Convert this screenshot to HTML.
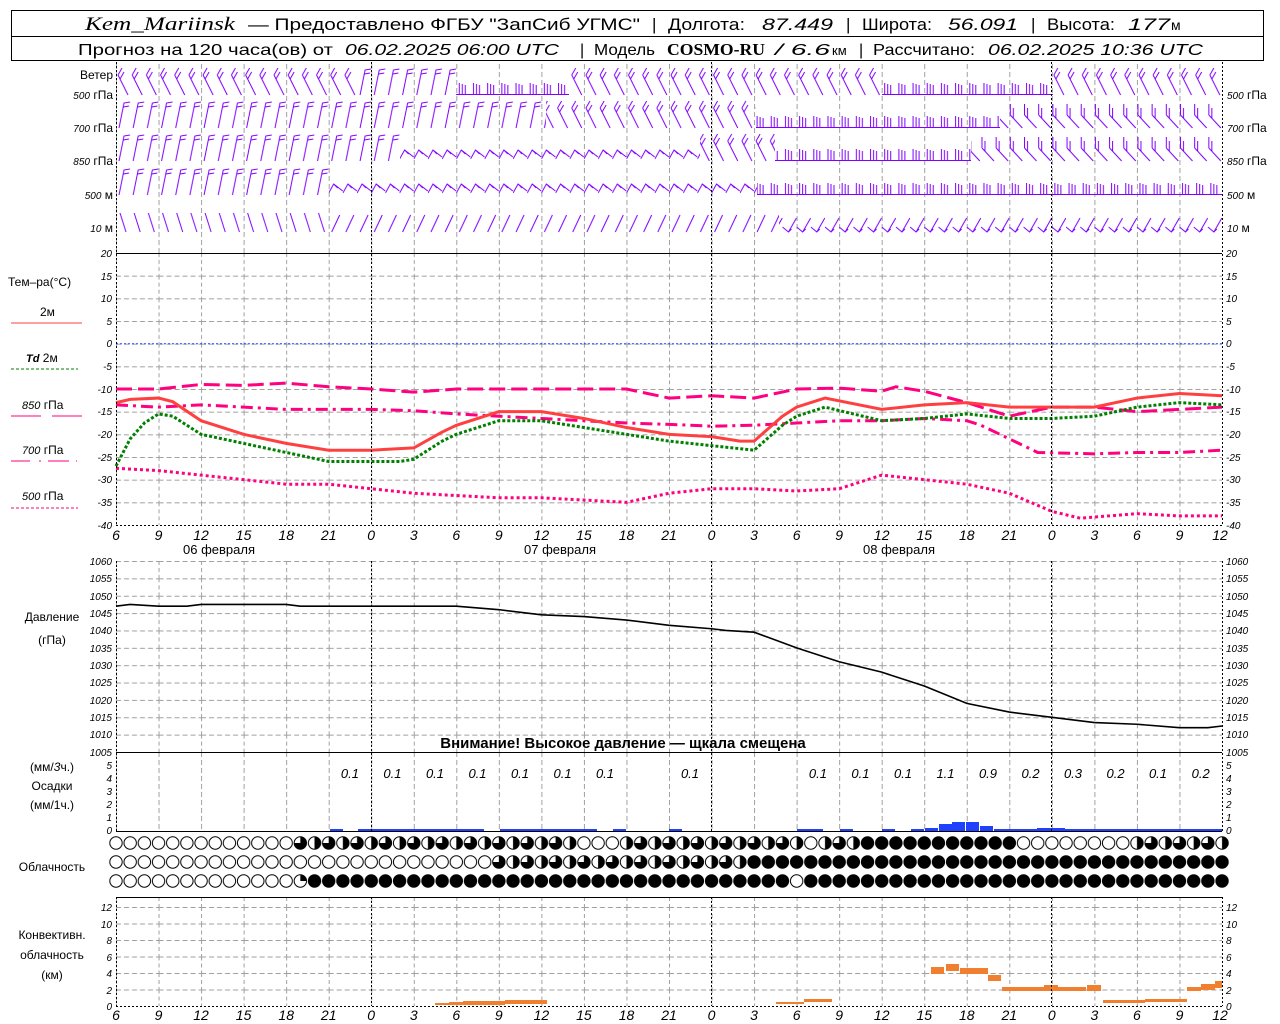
<!DOCTYPE html>
<html><head><meta charset="utf-8"><style>
html,body{margin:0;padding:0;background:#fff;width:1280px;height:1024px;overflow:hidden}
svg{display:block}
text{font-family:"Liberation Sans","DejaVu Sans",sans-serif;fill:#000}
.n{font-size:10px;font-style:italic}
.l{font-size:12px}
.x{font-size:14px;font-style:italic}
</style></head><body>
<svg width="1280" height="1024" viewBox="0 0 1280 1024" xmlns="http://www.w3.org/2000/svg">
<defs>
<pattern id="gT" patternUnits="userSpaceOnUse" x="116" y="253" width="42.538" height="22.667">
<line x1="0.5" y1="0" x2="0.5" y2="22.667" stroke="#a0a0a0" stroke-dasharray="4,3"/>
<line x1="0" y1="0.5" x2="42.538" y2="0.5" stroke="#a0a0a0" stroke-dasharray="5,3"/>
</pattern>
<pattern id="gP" patternUnits="userSpaceOnUse" x="116" y="561" width="42.538" height="17.364">
<line x1="0.5" y1="0" x2="0.5" y2="17.364" stroke="#a0a0a0" stroke-dasharray="4,3"/>
<line x1="0" y1="0.5" x2="42.538" y2="0.5" stroke="#a0a0a0" stroke-dasharray="5,3"/>
</pattern>
<pattern id="gC" patternUnits="userSpaceOnUse" x="116" y="907" width="42.538" height="16.5">
<line x1="0.5" y1="0" x2="0.5" y2="16.5" stroke="#a0a0a0" stroke-dasharray="4,3"/>
<line x1="0" y1="0.5" x2="42.538" y2="0.5" stroke="#a0a0a0" stroke-dasharray="5,3"/>
</pattern>
<pattern id="gV" patternUnits="userSpaceOnUse" x="116" y="0" width="42.538" height="8">
<line x1="0.5" y1="0" x2="0.5" y2="5" stroke="#a0a0a0"/>
</pattern>
<!-- cloud patterns -->
<pattern id="cE" patternUnits="userSpaceOnUse" x="108.91" y="0" width="14.18" height="1024">
<circle cx="7.09" cy="843" r="6.2" fill="#fff" stroke="#000"/><circle cx="7.09" cy="862" r="6.2" fill="#fff" stroke="#000"/><circle cx="7.09" cy="881" r="6.2" fill="#fff" stroke="#000"/>
</pattern>
<pattern id="cF" patternUnits="userSpaceOnUse" x="108.91" y="0" width="14.18" height="1024">
<circle cx="7.09" cy="843" r="6.7" fill="#000"/><circle cx="7.09" cy="862" r="6.7" fill="#000"/><circle cx="7.09" cy="881" r="6.7" fill="#000"/>
</pattern>
<pattern id="cH" patternUnits="userSpaceOnUse" x="108.91" y="0" width="28.36" height="1024">
<circle cx="7.09" cy="843" r="6.2" fill="#fff" stroke="#000"/><path d="M7.09 836.8A6.2 6.2 0 0 1 7.09 849.2Z" fill="#000"/>
<circle cx="7.09" cy="862" r="6.2" fill="#fff" stroke="#000"/><path d="M7.09 855.8A6.2 6.2 0 0 1 7.09 868.2Z" fill="#000"/>
<circle cx="7.09" cy="881" r="6.2" fill="#fff" stroke="#000"/><path d="M7.09 874.8A6.2 6.2 0 0 1 7.09 887.2Z" fill="#000"/>
<circle cx="21.27" cy="843" r="6.2" fill="#fff" stroke="#000"/><path d="M21.27 843V836.8A6.2 6.2 0 1 1 15.07 843Z" fill="#000"/>
<circle cx="21.27" cy="862" r="6.2" fill="#fff" stroke="#000"/><path d="M21.27 862V855.8A6.2 6.2 0 1 1 15.07 862Z" fill="#000"/>
<circle cx="21.27" cy="881" r="6.2" fill="#fff" stroke="#000"/><path d="M21.27 881V874.8A6.2 6.2 0 0 1 27.47 881Z" fill="#000"/>
</pattern>
<!-- wind barb patterns (tile 14.18 x 30, base at y=28) -->
<pattern id="wF" patternUnits="userSpaceOnUse" x="0" y="0" width="14.18" height="30">
<path d="M3 28L8 3L14 2M7.5 7L13 6" stroke="#8000ff" fill="none" stroke-width="1"/>
</pattern>
<pattern id="wC" patternUnits="userSpaceOnUse" x="0" y="0" width="14.18" height="30">
<path d="M2 8L12 28M2 8L6 1M4 12L8 5" stroke="#8000ff" fill="none" stroke-width="1"/>
</pattern>
<pattern id="wZ" patternUnits="userSpaceOnUse" x="0" y="0" width="14.18" height="30">
<path d="M0 26L5 17L14 24M5 17L9 21" stroke="#8000ff" fill="none" stroke-width="1"/>
</pattern>
<pattern id="wH" patternUnits="userSpaceOnUse" x="0" y="0" width="14.18" height="30">
<path d="M0 27.5H14.18M3 27V16M6 27V17M9 27V18" stroke="#8000ff" fill="none" stroke-width="1"/>
</pattern>
<pattern id="wL" patternUnits="userSpaceOnUse" x="0" y="0" width="14.18" height="30">
<path d="M1 15L13 28M1 15V4M4 18V8" stroke="#8000ff" fill="none" stroke-width="1"/>
</pattern>
<pattern id="wS" patternUnits="userSpaceOnUse" x="0" y="0" width="14.18" height="30">
<path d="M3 27L11 10" stroke="#8000ff" fill="none" stroke-width="1"/>
</pattern>
<pattern id="wB" patternUnits="userSpaceOnUse" x="0" y="0" width="14.18" height="30">
<path d="M4 8L10 27" stroke="#8000ff" fill="none" stroke-width="1"/>
</pattern>
<pattern id="wW" patternUnits="userSpaceOnUse" x="0" y="0" width="14.18" height="30">
<path d="M0 22L6 27L14 13M6 27L9 24" stroke="#8000ff" fill="none" stroke-width="1"/>
</pattern>
</defs>

<!-- Header -->
<rect x="11.5" y="10.5" width="1252" height="50" fill="none" stroke="#000"/>
<line x1="11" y1="36.5" x2="1264" y2="36.5" stroke="#000"/>
<text x="85" y="30" style="font-family:'Liberation Serif',serif;font-style:italic;font-size:19px" textLength="150" lengthAdjust="spacingAndGlyphs">Kem_Mariinsk</text>
<text x="248" y="30" style="font-size:17px" textLength="392" lengthAdjust="spacingAndGlyphs">— Предоставлено ФГБУ "ЗапСиб УГМС"</text>
<text x="652" y="30" style="font-size:17px">|</text>
<text x="668" y="30" style="font-size:17px" textLength="77" lengthAdjust="spacingAndGlyphs">Долгота:</text>
<text x="762" y="30" style="font-size:17px;font-style:italic" textLength="71" lengthAdjust="spacingAndGlyphs">87.449</text>
<text x="846" y="30" style="font-size:17px">|</text>
<text x="862" y="30" style="font-size:17px" textLength="70" lengthAdjust="spacingAndGlyphs">Широта:</text>
<text x="948" y="30" style="font-size:17px;font-style:italic" textLength="70" lengthAdjust="spacingAndGlyphs">56.091</text>
<text x="1031" y="30" style="font-size:17px">|</text>
<text x="1047" y="30" style="font-size:17px" textLength="68" lengthAdjust="spacingAndGlyphs">Высота:</text>
<text x="1128" y="30" style="font-size:17px;font-style:italic" textLength="42" lengthAdjust="spacingAndGlyphs">177</text>
<text x="1171" y="30" style="font-size:14px">м</text>
<text x="78" y="55" style="font-size:16px" textLength="255" lengthAdjust="spacingAndGlyphs">Прогноз на 120 часа(ов) от</text>
<text x="345" y="55" style="font-size:16px;font-style:italic" textLength="214" lengthAdjust="spacingAndGlyphs">06.02.2025 06:00 UTC</text>
<text x="580" y="55" style="font-size:16px">|</text>
<text x="594" y="55" style="font-size:16px" textLength="61" lengthAdjust="spacingAndGlyphs">Модель</text>
<text x="667" y="55" style="font-family:'Liberation Serif',serif;font-weight:bold;font-size:17px" textLength="98" lengthAdjust="spacingAndGlyphs">COSMO-RU</text>
<text x="775" y="55" style="font-size:16px;font-style:italic" textLength="55" lengthAdjust="spacingAndGlyphs">/ 6.6</text>
<text x="832" y="55" style="font-size:13px">км</text>
<text x="859" y="55" style="font-size:16px">|</text>
<text x="873" y="55" style="font-size:16px" textLength="102" lengthAdjust="spacingAndGlyphs">Рассчитано:</text>
<text x="988" y="55" style="font-size:16px;font-style:italic" textLength="215" lengthAdjust="spacingAndGlyphs">06.02.2025 10:36 UTC</text>

<!-- Wind panel -->
<rect x="116" y="62" width="1106" height="191" fill="url(#gV)"/>
<g transform="translate(116,67)">
<rect x="0" y="0" width="241" height="30" fill="url(#wC)"/>
<rect x="241" y="0" width="99" height="30" fill="url(#wF)"/>
<rect x="340" y="0" width="113" height="30" fill="url(#wH)"/>
<rect x="453" y="0" width="313" height="30" fill="url(#wC)"/>
<rect x="766" y="0" width="171" height="30" fill="url(#wH)"/>
<rect x="937" y="0" width="169" height="30" fill="url(#wC)"/>
</g>
<g transform="translate(116,100)">
<rect x="0" y="0" width="430" height="30" fill="url(#wF)"/>
<rect x="430" y="0" width="210" height="30" fill="url(#wC)"/>
<rect x="640" y="0" width="244" height="30" fill="url(#wH)"/>
<rect x="884" y="0" width="222" height="30" fill="url(#wL)"/>
</g>
<g transform="translate(116,133)">
<rect x="0" y="0" width="284" height="30" fill="url(#wF)"/>
<rect x="284" y="0" width="300" height="30" fill="url(#wZ)"/>
<rect x="584" y="0" width="75" height="30" fill="url(#wC)"/>
<rect x="659" y="0" width="196" height="30" fill="url(#wH)"/>
<rect x="855" y="0" width="251" height="30" fill="url(#wL)"/>
</g>
<g transform="translate(116,167)">
<rect x="0" y="0" width="213" height="30" fill="url(#wF)"/>
<rect x="213" y="0" width="428" height="30" fill="url(#wZ)"/>
<rect x="641" y="0" width="465" height="30" fill="url(#wH)"/>
</g>
<g transform="translate(116,205)">
<rect x="0" y="0" width="213" height="30" fill="url(#wB)"/>
<rect x="213" y="0" width="450" height="30" fill="url(#wS)"/>
<rect x="663" y="0" width="443" height="30" fill="url(#wW)"/>
</g>
<text class="l" x="113" y="79" text-anchor="end">Ветер</text>
<text class="l" x="113" y="99" text-anchor="end"><tspan font-style="italic" font-size="10">500</tspan> гПа</text>
<text class="l" x="113" y="132" text-anchor="end"><tspan font-style="italic" font-size="10">700</tspan> гПа</text>
<text class="l" x="113" y="165" text-anchor="end"><tspan font-style="italic" font-size="10">850</tspan> гПа</text>
<text class="l" x="113" y="199" text-anchor="end"><tspan font-style="italic" font-size="10">500</tspan> м</text>
<text class="l" x="113" y="232" text-anchor="end"><tspan font-style="italic" font-size="10">10</tspan>   м</text>
<text class="l" x="1227" y="99"><tspan font-style="italic" font-size="10">500</tspan> гПа</text>
<text class="l" x="1227" y="132"><tspan font-style="italic" font-size="10">700</tspan> гПа</text>
<text class="l" x="1227" y="165"><tspan font-style="italic" font-size="10">850</tspan> гПа</text>
<text class="l" x="1227" y="199"><tspan font-style="italic" font-size="10">500</tspan> м</text>
<text class="l" x="1227" y="232"><tspan font-style="italic" font-size="10">10</tspan>   м</text>

<!-- Temperature panel -->
<rect x="116" y="253" width="1106" height="272" fill="url(#gT)"/>
<line x1="116" y1="253.5" x2="1222" y2="253.5" stroke="#000"/>
<line x1="116" y1="525.5" x2="1222" y2="525.5" stroke="#000" stroke-dasharray="2,2"/>
<line x1="116" y1="343.7" x2="1222" y2="343.7" stroke="#2040ff" stroke-dasharray="2,2"/>
<g font-size="10" font-style="italic">
<text class="n" x="112" y="257" text-anchor="end">20</text><text class="n" x="112" y="280" text-anchor="end">15</text><text class="n" x="112" y="302" text-anchor="end">10</text><text class="n" x="112" y="325" text-anchor="end">5</text><text class="n" x="112" y="347" text-anchor="end">0</text><text class="n" x="112" y="370" text-anchor="end">-5</text><text class="n" x="112" y="393" text-anchor="end">-10</text><text class="n" x="112" y="415" text-anchor="end">-15</text><text class="n" x="112" y="438" text-anchor="end">-20</text><text class="n" x="112" y="461" text-anchor="end">-25</text><text class="n" x="112" y="483" text-anchor="end">-30</text><text class="n" x="112" y="506" text-anchor="end">-35</text><text class="n" x="112" y="529" text-anchor="end">-40</text>
<text class="n" x="1226" y="257">20</text><text class="n" x="1226" y="280">15</text><text class="n" x="1226" y="302">10</text><text class="n" x="1226" y="325">5</text><text class="n" x="1226" y="347">0</text><text class="n" x="1226" y="370">-5</text><text class="n" x="1226" y="393">-10</text><text class="n" x="1226" y="415">-15</text><text class="n" x="1226" y="438">-20</text><text class="n" x="1226" y="461">-25</text><text class="n" x="1226" y="483">-30</text><text class="n" x="1226" y="506">-35</text><text class="n" x="1226" y="529">-40</text>
</g>
<g transform="translate(116,343.67) scale(14.18,-4.533)" fill="none">
<polyline vector-effect="non-scaling-stroke" stroke="#ff0080" stroke-width="3" stroke-dasharray="3,3" points="0,-27.5 3,-28 6,-29 9,-30 12,-31 15,-31 18,-32 21,-33 24,-33.5 27,-34 30,-34 33,-34.5 36,-35 39,-33 42,-32 45,-32 48,-32.5 51,-32 54,-29 57,-30 60,-31 63,-33 66,-37 68,-38.5 72,-37.5 75,-38 78,-38"/>
<polyline vector-effect="non-scaling-stroke" stroke="#ff0080" stroke-width="3" stroke-dasharray="16,6" points="0,-10 3,-10 6,-9 9,-9.2 12,-8.7 15,-9.5 18,-10 21,-10.7 24,-10 27,-10 30,-10 33,-10 36,-10 39,-12 42,-11.5 45,-12 48,-10 51,-9.8 54,-10.5 55,-9.5 57,-10.5 60,-13 63,-16 66,-14 69,-14 72,-15 75,-14.5 78,-14"/>
<polyline vector-effect="non-scaling-stroke" stroke="#ff0080" stroke-width="3" stroke-dasharray="12,5,3,5" points="0,-13.5 3,-14 6,-13.5 9,-14 12,-14.5 15,-14.5 18,-14.5 21,-14.8 24,-15.5 27,-16 30,-16.5 33,-17 36,-17.5 39,-17.8 42,-18.2 45,-18 48,-17.5 51,-17 54,-17 57,-16.5 60,-17 61,-18 63,-21 65,-24 69,-24.3 72,-24 75,-24 78,-23.5"/>
<polyline vector-effect="non-scaling-stroke" stroke="#008000" stroke-width="3" stroke-dasharray="3,2" points="0,-27 1,-21 2,-17.5 3,-15.5 4,-16 5,-18 6,-20 9,-22 12,-24 15,-26 18,-26 20,-26 21,-25.5 23,-21.5 24,-20 27,-17 30,-17 33,-18.5 36,-20 39,-21.5 42,-22.5 45,-23.5 47,-18 48,-16 50,-14 54,-17 57,-16.5 60,-15.5 63,-16.5 66,-16.5 69,-16 72,-14 75,-13 78,-13.5"/>
<polyline vector-effect="non-scaling-stroke" stroke="#ff4040" stroke-width="3" points="0,-13 1,-12.3 3,-12 4,-12.8 6,-17 9,-20 12,-22 15,-23.5 18,-23.5 21,-23 23,-19.5 24,-18 27,-15 30,-15 33,-16.5 36,-18.5 39,-20 42,-20.5 44,-21.5 45,-21.5 47,-16 48,-14 50,-12 54,-14.5 57,-13.5 60,-13 63,-14 66,-14 69,-14 72,-12 75,-11 78,-11.5"/>
</g>
<!-- legend -->
<text class="l" x="8" y="286">Тем–ра(°C)</text>
<text class="l" x="40" y="316">2м</text>
<line x1="11" y1="323" x2="82" y2="323" stroke="#ff4040"/>
<text class="l" x="26" y="362"><tspan font-style="italic" font-weight="bold" font-size="11">Td</tspan>  2м</text>
<line x1="11" y1="369" x2="78" y2="369" stroke="#008000" stroke-dasharray="3,2"/>
<text class="l" x="22" y="409"><tspan font-style="italic" font-size="11">850</tspan> гПа</text>
<path d="M11 416H41M52 416H82" stroke="#ff0080"/>
<text class="l" x="22" y="454"><tspan font-style="italic" font-size="11">700</tspan> гПа</text>
<path d="M11 461H30M39 461H41M48 461H69M76 461H77" stroke="#ff0080"/>
<text class="l" x="22" y="500"><tspan font-style="italic" font-size="11">500</tspan> гПа</text>
<line x1="11" y1="508" x2="78" y2="508" stroke="#ff0080" stroke-dasharray="3,2"/>
<!-- x labels temp -->
<g class="x" font-size="14" font-style="italic" text-anchor="middle">
<text class="x" x="116" y="540" text-anchor="middle">6</text><text class="x" x="158.5" y="540" text-anchor="middle">9</text><text class="x" x="201" y="540" text-anchor="middle">12</text><text class="x" x="243.6" y="540" text-anchor="middle">15</text><text class="x" x="286.2" y="540" text-anchor="middle">18</text><text class="x" x="328.7" y="540" text-anchor="middle">21</text><text class="x" x="371.2" y="540" text-anchor="middle">0</text><text class="x" x="413.8" y="540" text-anchor="middle">3</text><text class="x" x="456.3" y="540" text-anchor="middle">6</text><text class="x" x="498.8" y="540" text-anchor="middle">9</text><text class="x" x="541.4" y="540" text-anchor="middle">12</text><text class="x" x="583.9" y="540" text-anchor="middle">15</text><text class="x" x="626.5" y="540" text-anchor="middle">18</text><text class="x" x="669" y="540" text-anchor="middle">21</text><text class="x" x="711.5" y="540" text-anchor="middle">0</text><text class="x" x="754" y="540" text-anchor="middle">3</text><text class="x" x="796.6" y="540" text-anchor="middle">6</text><text class="x" x="839.1" y="540" text-anchor="middle">9</text><text class="x" x="881.7" y="540" text-anchor="middle">12</text><text class="x" x="924.2" y="540" text-anchor="middle">15</text><text class="x" x="966.8" y="540" text-anchor="middle">18</text><text class="x" x="1009.3" y="540" text-anchor="middle">21</text><text class="x" x="1051.8" y="540" text-anchor="middle">0</text><text class="x" x="1094.4" y="540" text-anchor="middle">3</text><text class="x" x="1136.9" y="540" text-anchor="middle">6</text><text class="x" x="1179.5" y="540" text-anchor="middle">9</text><text class="x" x="1220" y="540" text-anchor="middle">12</text>
</g>
<text class="l" x="219" y="554" text-anchor="middle" style="font-size:13px">06 февраля</text>
<text class="l" x="560" y="554" text-anchor="middle" style="font-size:13px">07 февраля</text>
<text class="l" x="899" y="554" text-anchor="middle" style="font-size:13px">08 февраля</text>

<!-- Pressure panel -->
<rect x="116" y="561" width="1106" height="191" fill="url(#gP)"/>
<line x1="116" y1="752.5" x2="1222" y2="752.5" stroke="#000"/>
<text class="n" x="112" y="565" text-anchor="end">1060</text><text class="n" x="112" y="582" text-anchor="end">1055</text><text class="n" x="112" y="600" text-anchor="end">1050</text><text class="n" x="112" y="617" text-anchor="end">1045</text><text class="n" x="112" y="634" text-anchor="end">1040</text><text class="n" x="112" y="652" text-anchor="end">1035</text><text class="n" x="112" y="669" text-anchor="end">1030</text><text class="n" x="112" y="686" text-anchor="end">1025</text><text class="n" x="112" y="704" text-anchor="end">1020</text><text class="n" x="112" y="721" text-anchor="end">1015</text><text class="n" x="112" y="738" text-anchor="end">1010</text><text class="n" x="112" y="756" text-anchor="end">1005</text>
<text class="n" x="1226" y="565">1060</text><text class="n" x="1226" y="582">1055</text><text class="n" x="1226" y="600">1050</text><text class="n" x="1226" y="617">1045</text><text class="n" x="1226" y="634">1040</text><text class="n" x="1226" y="652">1035</text><text class="n" x="1226" y="669">1030</text><text class="n" x="1226" y="686">1025</text><text class="n" x="1226" y="704">1020</text><text class="n" x="1226" y="721">1015</text><text class="n" x="1226" y="738">1010</text><text class="n" x="1226" y="756">1005</text>
<g transform="translate(116,4242.4) scale(14.18,-3.473)">
<polyline vector-effect="non-scaling-stroke" fill="none" stroke="#000" stroke-width="1.6" points="0,1047 1,1047.5 3,1047 5,1047 6,1047.5 12,1047.5 13,1047 24,1047 27,1046 30,1044.5 33,1044 36,1043 39,1041.5 42,1040.5 43,1040 45,1039.5 46,1038 48,1035 51,1031 54,1028 57,1024 60,1019 63,1016.5 66,1015 69,1013.5 72,1013 75,1012 77,1012 78,1012.5"/>
</g>
<text class="l" x="52" y="621" text-anchor="middle">Давление</text>
<text class="l" x="52" y="644" text-anchor="middle">(гПа)</text>
<text x="623" y="748" text-anchor="middle" style="font-size:15px;font-weight:bold">Внимание! Высокое давление — щкала смещена</text>

<!-- Precip panel -->
<rect x="116" y="753" width="1106" height="78" fill="url(#gV)"/>
<line x1="116" y1="831.5" x2="1222" y2="831.5" stroke="#000"/>
<text class="n" x="112" y="769" text-anchor="end">5</text><text class="n" x="112" y="782" text-anchor="end">4</text><text class="n" x="112" y="795" text-anchor="end">3</text><text class="n" x="112" y="808" text-anchor="end">2</text><text class="n" x="112" y="821" text-anchor="end">1</text><text class="n" x="112" y="834" text-anchor="end">0</text>
<text class="n" x="1226" y="769">5</text><text class="n" x="1226" y="782">4</text><text class="n" x="1226" y="795">3</text><text class="n" x="1226" y="808">2</text><text class="n" x="1226" y="821">1</text><text class="n" x="1226" y="834">0</text>
<text class="l" x="52" y="771" text-anchor="middle">(мм/<tspan font-style="italic">3</tspan>ч.)</text>
<text class="l" x="52" y="790" text-anchor="middle">Осадки</text>
<text class="l" x="52" y="809" text-anchor="middle">(мм/1ч.)</text>
<g fill="#2040ff">
<rect x="330" y="829" width="13" height="2"/><rect x="358" y="829" width="56" height="2"/><rect x="414" y="829" width="70" height="2"/><rect x="500" y="829" width="97" height="2"/><rect x="613" y="829" width="13" height="2"/>
<rect x="669" y="829" width="13" height="2"/><rect x="797" y="829" width="26" height="2"/><rect x="840" y="829" width="13" height="2"/><rect x="882" y="829" width="13" height="2"/>
<rect x="911" y="829" width="13" height="2"/><rect x="925" y="828" width="13" height="3"/><rect x="939" y="824" width="13" height="7"/><rect x="952" y="822" width="13" height="9"/><rect x="966" y="822" width="13" height="9"/><rect x="980" y="826" width="13" height="5"/><rect x="994" y="829" width="43" height="2"/><rect x="1037" y="828" width="28" height="3"/><rect x="1065" y="829" width="120" height="2"/><rect x="1185" y="829" width="37" height="2"/>
</g>
<g class="x" font-size="13">
<text class="x" x="349.9" y="778" text-anchor="middle" style="font-size:13px">0.1</text><text class="x" x="392.4" y="778" text-anchor="middle" style="font-size:13px">0.1</text><text class="x" x="435" y="778" text-anchor="middle" style="font-size:13px">0.1</text><text class="x" x="477.5" y="778" text-anchor="middle" style="font-size:13px">0.1</text><text class="x" x="520" y="778" text-anchor="middle" style="font-size:13px">0.1</text><text class="x" x="562.6" y="778" text-anchor="middle" style="font-size:13px">0.1</text><text class="x" x="605" y="778" text-anchor="middle" style="font-size:13px">0.1</text><text class="x" x="690" y="778" text-anchor="middle" style="font-size:13px">0.1</text><text class="x" x="817.9" y="778" text-anchor="middle" style="font-size:13px">0.1</text><text class="x" x="860.4" y="778" text-anchor="middle" style="font-size:13px">0.1</text><text class="x" x="903" y="778" text-anchor="middle" style="font-size:13px">0.1</text><text class="x" x="945.5" y="778" text-anchor="middle" style="font-size:13px">1.1</text><text class="x" x="988" y="778" text-anchor="middle" style="font-size:13px">0.9</text><text class="x" x="1030.6" y="778" text-anchor="middle" style="font-size:13px">0.2</text><text class="x" x="1073" y="778" text-anchor="middle" style="font-size:13px">0.3</text><text class="x" x="1115.6" y="778" text-anchor="middle" style="font-size:13px">0.2</text><text class="x" x="1158" y="778" text-anchor="middle" style="font-size:13px">0.1</text><text class="x" x="1200.7" y="778" text-anchor="middle" style="font-size:13px">0.2</text>
</g>

<!-- Cloud rows -->
<!-- row1 y 834-852 -->
<rect x="108.91" y="834" width="184.34" height="18" fill="url(#cE)"/>
<rect x="293.25" y="834" width="283.6" height="18" fill="url(#cH)"/>
<rect x="576.85" y="834" width="42.54" height="18" fill="url(#cE)"/>
<rect x="619.39" y="834" width="184.34" height="18" fill="url(#cH)"/>
<rect x="803.73" y="834" width="14.18" height="18" fill="url(#cE)"/>
<rect x="817.91" y="834" width="42.54" height="18" fill="url(#cH)"/>
<rect x="860.45" y="834" width="155.98" height="18" fill="url(#cF)"/>
<rect x="1016.43" y="834" width="113.44" height="18" fill="url(#cE)"/>
<rect x="1129.87" y="834" width="99.26" height="18" fill="url(#cH)"/>
<!-- row2 y 853-871 -->
<rect x="108.91" y="853" width="382.86" height="18" fill="url(#cE)"/>
<rect x="491.77" y="853" width="255.24" height="18" fill="url(#cH)"/>
<rect x="747.01" y="853" width="482.12" height="18" fill="url(#cF)"/>
<!-- row3 y 872-890 -->
<rect x="108.91" y="872" width="184.34" height="18" fill="url(#cE)"/>
<rect x="293.25" y="872" width="14.18" height="18" fill="url(#cH)"/>
<rect x="307.43" y="872" width="482.12" height="18" fill="url(#cF)"/>
<rect x="789.55" y="872" width="14.18" height="18" fill="url(#cE)"/>
<rect x="803.73" y="872" width="425.4" height="18" fill="url(#cF)"/>
<text class="l" x="52" y="871" text-anchor="middle">Облачность</text>

<!-- Convective panel -->
<line x1="116" y1="897.5" x2="1222" y2="897.5" stroke="#000"/>
<rect x="116" y="898" width="1106" height="9" fill="url(#gV)"/>
<rect x="116" y="907" width="1106" height="99" fill="url(#gC)"/>
<line x1="116" y1="1006.5" x2="1222" y2="1006.5" stroke="#000" stroke-dasharray="2,2"/>
<text class="n" x="112" y="911" text-anchor="end">12</text><text class="n" x="112" y="928" text-anchor="end">10</text><text class="n" x="112" y="944" text-anchor="end">8</text><text class="n" x="112" y="961" text-anchor="end">6</text><text class="n" x="112" y="977" text-anchor="end">4</text><text class="n" x="112" y="994" text-anchor="end">2</text><text class="n" x="112" y="1010" text-anchor="end">0</text>
<text class="n" x="1226" y="911">12</text><text class="n" x="1226" y="928">10</text><text class="n" x="1226" y="944">8</text><text class="n" x="1226" y="961">6</text><text class="n" x="1226" y="977">4</text><text class="n" x="1226" y="994">2</text><text class="n" x="1226" y="1010">0</text>
<text class="l" x="52" y="939" text-anchor="middle">Конвективн.</text>
<text class="l" x="52" y="959" text-anchor="middle">облачность</text>
<text class="l" x="52" y="979" text-anchor="middle">(км)</text>
<g fill="#f08030">
<rect x="435" y="1003" width="14" height="2"/><rect x="449" y="1002" width="14" height="3"/><rect x="463" y="1001" width="42" height="4"/><rect x="505" y="1000" width="28" height="4"/><rect x="533" y="1000" width="14" height="4"/>
<rect x="776" y="1002" width="14" height="2"/><rect x="790" y="1002" width="14" height="2"/><rect x="804" y="999" width="28" height="3"/>
<rect x="931" y="967" width="13" height="7"/><rect x="946" y="964" width="13" height="7"/><rect x="960" y="968" width="28" height="6"/><rect x="988" y="975" width="13" height="6"/>
<rect x="1002" y="987" width="49" height="4"/><rect x="1044" y="985" width="14" height="6"/><rect x="1058" y="987" width="28" height="4"/><rect x="1087" y="985" width="14" height="6"/>
<rect x="1103" y="1000" width="42" height="3"/><rect x="1145" y="999" width="42" height="3"/>
<rect x="1187" y="987" width="14" height="4"/><rect x="1201" y="984" width="14" height="6"/><rect x="1215" y="981" width="7" height="7"/>
</g>
<g>
<text class="x" x="116" y="1020" text-anchor="middle">6</text><text class="x" x="158.5" y="1020" text-anchor="middle">9</text><text class="x" x="201" y="1020" text-anchor="middle">12</text><text class="x" x="243.6" y="1020" text-anchor="middle">15</text><text class="x" x="286.2" y="1020" text-anchor="middle">18</text><text class="x" x="328.7" y="1020" text-anchor="middle">21</text><text class="x" x="371.2" y="1020" text-anchor="middle">0</text><text class="x" x="413.8" y="1020" text-anchor="middle">3</text><text class="x" x="456.3" y="1020" text-anchor="middle">6</text><text class="x" x="498.8" y="1020" text-anchor="middle">9</text><text class="x" x="541.4" y="1020" text-anchor="middle">12</text><text class="x" x="583.9" y="1020" text-anchor="middle">15</text><text class="x" x="626.5" y="1020" text-anchor="middle">18</text><text class="x" x="669" y="1020" text-anchor="middle">21</text><text class="x" x="711.5" y="1020" text-anchor="middle">0</text><text class="x" x="754" y="1020" text-anchor="middle">3</text><text class="x" x="796.6" y="1020" text-anchor="middle">6</text><text class="x" x="839.1" y="1020" text-anchor="middle">9</text><text class="x" x="881.7" y="1020" text-anchor="middle">12</text><text class="x" x="924.2" y="1020" text-anchor="middle">15</text><text class="x" x="966.8" y="1020" text-anchor="middle">18</text><text class="x" x="1009.3" y="1020" text-anchor="middle">21</text><text class="x" x="1051.8" y="1020" text-anchor="middle">0</text><text class="x" x="1094.4" y="1020" text-anchor="middle">3</text><text class="x" x="1136.9" y="1020" text-anchor="middle">6</text><text class="x" x="1179.5" y="1020" text-anchor="middle">9</text><text class="x" x="1220" y="1020" text-anchor="middle">12</text>
</g>

<!-- axes and midnight lines -->
<g stroke="#000" stroke-dasharray="2,2">
<line x1="116.5" y1="62" x2="116.5" y2="525"/><line x1="1222.5" y1="62" x2="1222.5" y2="525"/>
<line x1="116.5" y1="561" x2="116.5" y2="831"/><line x1="1222.5" y1="561" x2="1222.5" y2="831"/>
<line x1="116.5" y1="897" x2="116.5" y2="1006"/><line x1="1222.5" y1="897" x2="1222.5" y2="1006"/>
<line x1="371.5" y1="62" x2="371.5" y2="525"/><line x1="711.5" y1="62" x2="711.5" y2="525"/><line x1="1051.5" y1="62" x2="1051.5" y2="525"/>
<line x1="371.5" y1="561" x2="371.5" y2="831"/><line x1="711.5" y1="561" x2="711.5" y2="831"/><line x1="1051.5" y1="561" x2="1051.5" y2="831"/>
<line x1="371.5" y1="897" x2="371.5" y2="1006"/><line x1="711.5" y1="897" x2="711.5" y2="1006"/><line x1="1051.5" y1="897" x2="1051.5" y2="1006"/>
</g>
</svg>
</body></html>
